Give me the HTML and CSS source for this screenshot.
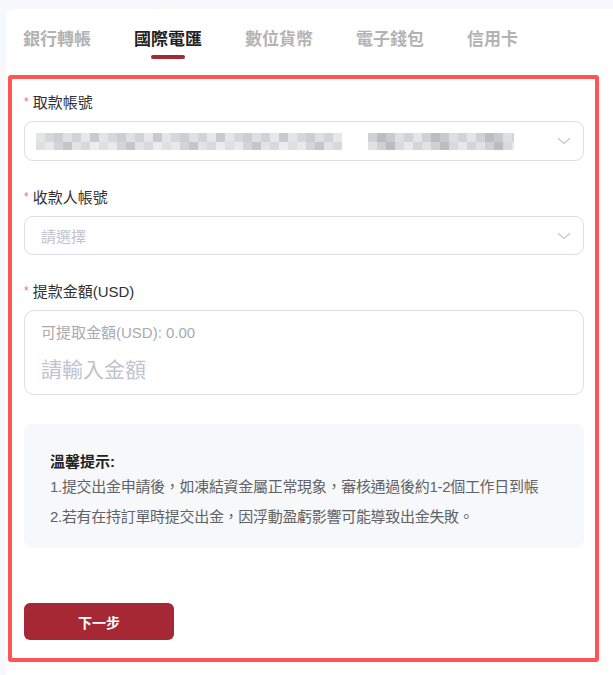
FILE: index.html
```html
<!DOCTYPE html>
<html lang="zh-Hant">
<head>
<meta charset="utf-8">
<title>出金</title>
<link rel="stylesheet" href="styles.css">
</head>
<body>
<div class="card">
  <nav class="tabs">
    <div class="tab">銀行轉帳</div>
    <div class="tab active">國際電匯</div>
    <div class="tab">數位貨幣</div>
    <div class="tab">電子錢包</div>
    <div class="tab">信用卡</div>
  </nav>
  <form class="panel">
    <div class="field">
      <label class="label"><span class="req">*</span>取款帳號</label>
      <div class="select">
        <div class="masked">
          <span class="mask mask-a"></span>
          <span class="mask mask-b"></span>
        </div>
        <svg class="chev" width="14" height="8" viewBox="0 0 14 8"><path d="M1 1.2 L7 6.5 L13 1.2" fill="none" stroke="#c0c4cc" stroke-width="1.2"/></svg>
      </div>
    </div>
    <div class="field">
      <label class="label"><span class="req">*</span>收款人帳號</label>
      <div class="select">
        <span class="placeholder">請選擇</span>
        <svg class="chev" width="14" height="8" viewBox="0 0 14 8"><path d="M1 1.2 L7 6.5 L13 1.2" fill="none" stroke="#c0c4cc" stroke-width="1.2"/></svg>
      </div>
    </div>
    <div class="field">
      <label class="label"><span class="req">*</span>提款金額(USD)</label>
      <div class="amount">
        <div class="avail">可提取金額(USD): 0.00</div>
        <div class="amount-input">請輸入金額</div>
      </div>
    </div>
    <div class="tips">
      <div class="tips-title">溫馨提示:</div>
      <p class="tips-line">1.提交出金申請後，如凍結資金屬正常現象，審核通過後約1-2個工作日到帳</p>
      <p class="tips-line">2.若有在持訂單時提交出金，因浮動盈虧影響可能導致出金失敗。</p>
    </div>
    <button type="button" class="next">下一步</button>
  </form>
</div>
</body>
</html>
```

FILE: styles.css
```css
* { box-sizing: border-box; }
html, body { margin: 0; padding: 0; }
body {
  background: #f7f8fa;
  font-family: "Liberation Sans", "Noto Sans CJK TC", sans-serif;
  color: #303133;
  overflow: hidden;
}
.card {
  margin: 9px 0 0 6px;
  background: #fff;
  border-radius: 8px 0 0 0;
  min-height: calc(100vh - 9px);
  padding-top: 19px;
}
.tabs {
  display: flex;
  gap: 43px;
  padding-left: 17px;
}
.tab {
  display: flex;
  flex-direction: column;
  align-items: center;
  font-size: 17px;
  line-height: 24px;
  font-weight: 700;
  color: #b3b3b3;
}
.tab::after {
  content: "";
  width: 34px;
  height: 4px;
  margin-top: 3px;
  border-radius: 2px;
  background: transparent;
}
.tab.active { color: #222; }
.tab.active::after { background: #a52834; }

.panel {
  margin: 16px 0 0 2px;
  width: 591px;
  border: 4px solid #ff5555;
  border-radius: 3px;
  padding: 13px 11px 18px 12px;
  display: flex;
  flex-direction: column;
  align-items: stretch;
}
.field { display: flex; flex-direction: column; margin-bottom: 26px; }
.field:nth-child(3) { margin-bottom: 29px; }
.label {
  font-size: 15px;
  line-height: 22px;
  color: #303133;
  margin-bottom: 7px;
  display: flex;
  align-items: flex-start;
}
.req {
  color: #f56c6c;
  font-size: 12px;
  line-height: 16px;
  margin-right: 4px;
  margin-top: 2px;
}
.select {
  height: 40px;
  border: 1px solid #dcdfe6;
  border-radius: 9px;
  display: flex;
  align-items: center;
  justify-content: space-between;
  padding: 0 12px 0 11px;
}
.field:nth-child(2) .select { height: 39px; }
.placeholder { font-size: 15px; color: #c0c4cc; padding-left: 5px; }
.masked { display: flex; gap: 26px; align-items: center; }
.mask { display: block; height: 17px; }
.mask-a {
  width: 306px;
  background:
    repeating-linear-gradient(90deg, #e4e5e8 0 9px, #d6d7db 9px 18px, #cdced2 18px 27px, #dfe0e3 27px 36px, #d2d3d6 36px 45px, #e7e7e9 45px 54px, #c9cacd 54px 63px) 0 0 / 100% 9px no-repeat,
    repeating-linear-gradient(90deg, #dedfe2 0 9px, #e9e9eb 9px 18px, #d3d4d7 18px 27px, #c6c6c9 27px 36px, #e2e3e5 36px 45px, #d8d9dc 45px 54px, #ececee 54px 63px) 0 9px / 100% 8px no-repeat;
}
.mask-b {
  width: 146px;
  background:
    repeating-linear-gradient(90deg, #d0d1d4 0 9px, #bdbdc1 9px 18px, #c9cacd 18px 27px, #dedfe1 27px 36px, #d2d3d6 36px 45px, #e5e5e7 45px 54px) 0 0 / 100% 9px no-repeat,
    repeating-linear-gradient(90deg, #e2e2e4 0 9px, #cfd0d3 9px 18px, #bcbcc0 18px 27px, #d9dadc 27px 36px, #e8e8ea 36px 45px, #d4d5d8 45px 54px) 0 9px / 100% 8px no-repeat;
}
.chev { flex: none; }
.amount {
  height: 85px;
  border: 1px solid #dcdfe6;
  border-radius: 10px;
  padding: 12px 16px 0;
}
.avail { font-size: 15px; line-height: 20px; color: #a8abb2; }
.amount-input { margin-top: 13px; font-size: 21px; line-height: 28px; color: #c0c4cc; }

.tips {
  background: #f7f8fa;
  border-radius: 8px;
  padding: 27px 26px 16px;
  height: 124px;
}
.tips-title { font-size: 15px; line-height: 21px; font-weight: 700; color: #222; }
.tips-line { margin: 0; font-size: 15px; line-height: 30px; color: #606266; white-space: nowrap; letter-spacing: -0.3px; }

.next {
  margin-top: 55px;
  align-self: flex-start;
  width: 150px;
  height: 37px;
  border: 0;
  border-radius: 6px;
  background: #a52834;
  color: #fff;
  font-family: inherit;
  font-size: 14px;
  font-weight: 700;
}
```
